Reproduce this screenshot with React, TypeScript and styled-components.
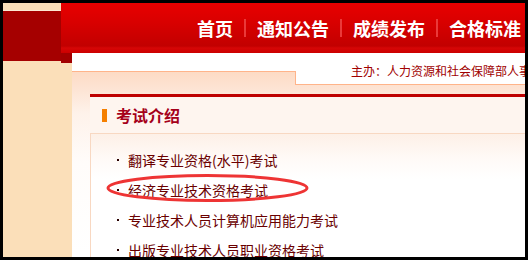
import React from "react";
import styled, { createGlobalStyle } from "styled-components";

const Global = createGlobalStyle`
  html, body { margin: 0; padding: 0; background: #ffffff; }
  body { font-family: "Noto Sans CJK SC", "Noto Sans", sans-serif; }
  #root { width: 531px; height: 262px; }
`;

const Frame = styled.div`
  position: relative;
  box-sizing: border-box;
  width: 528px;
  height: 260px;
  border: 3px solid #000;
  overflow: hidden;
  display: flex;
  background: #fbdfb9;
`;

const Sidebar = styled.div`
  flex: none;
  width: 58px;
  padding-top: 7px;
  background: #fbdfb9;
`;

const SideBlock = styled.div`
  height: 50px;
  border-top: 1px solid #fde9d3;
  background: #a50000;
`;

const Main = styled.div`
  flex: 1;
  min-width: 0;
  display: flex;
  flex-direction: column;
`;

const Header = styled.nav`
  flex: none;
  height: 50px;
  display: flex;
  align-items: center;
  padding-left: 136px;
  background: linear-gradient(
    to bottom,
    #e80000 0%,
    #d80000 40%,
    #c20000 86%,
    #d60606 90%,
    #cc0000 100%
  );
  white-space: nowrap;
`;

const NavItem = styled.span`
  color: #ffffff;
  font-size: 18px;
  font-weight: 700;
  line-height: 20px;
`;

const NavSep = styled.span`
  flex: none;
  width: 2px;
  height: 18px;
  margin: 0 11px;
  background: #ea3a3a;
`;

const Body = styled.div`
  flex: 1;
  display: flex;
  min-height: 0;
`;

const Gutter = styled.div`
  flex: none;
  width: 11px;
  background: linear-gradient(to bottom, #a20000 0 10px, #fbdfb9 10px);
`;

const Panel = styled.div`
  flex: 1;
  min-width: 0;
  display: flex;
  flex-direction: column;
  background: linear-gradient(
    to bottom,
    #ffffff 0,
    #ffffff 18px,
    #fddbc4 18px,
    #fde4d4 36px,
    #fef2ea 60px,
    #fffcfa 110px,
    #ffffff 200px
  );
`;

const SubBar = styled.div`
  flex: none;
  height: 32px;
  display: flex;
`;

const LeftTab = styled.div`
  flex: none;
  align-self: flex-end;
  box-sizing: border-box;
  width: 224px;
  height: 14px;
  border-top: 1px solid #ffb48a;
  border-right: 1px solid #ffb48a;
`;

const Sponsor = styled.div`
  flex: 1;
  min-width: 0;
  box-sizing: border-box;
  padding: 11px 0 0 55px;
  background: #ffffff;
  border-bottom: 1px solid #ffb48a;
  color: #a00000;
  font-size: 12px;
  line-height: 14px;
  white-space: nowrap;
  overflow: hidden;
`;

const Content = styled.div`
  flex: 1;
  padding: 9px 0 0 18px;
`;

const Section = styled.section`
  border-top: 3px solid #be0000;
  background: #fef5ef;
`;

const TitleRow = styled.div`
  height: 36px;
  display: flex;
  align-items: center;
  padding-left: 12px;
`;

const TitleBar = styled.span`
  flex: none;
  width: 5px;
  height: 13px;
  margin-right: 9px;
  background: #f57f00;
`;

const TitleText = styled.h2`
  margin: 0;
  color: #a5001a;
  font-size: 16px;
  font-weight: 700;
  line-height: 20px;
`;

const List = styled.ul`
  margin: 0;
  padding: 11px 0 0 26px;
  list-style: none;
  border-top: 1px solid #f8d8c2;
  border-left: 1px solid #f8d8c2;
  background: linear-gradient(to bottom, #fdf0e7 0, #fffaf7 25px, #ffffff 45px);
`;

const Item = styled.li`
  height: 30px;
  display: flex;
  align-items: center;
  color: #6a0000;
  font-size: 14px;
  line-height: 30px;
  white-space: nowrap;

  &::before {
    content: "";
    flex: none;
    width: 2px;
    height: 2px;
    margin-right: 9px;
    background: #2a0000;
  }
`;

const Mark = styled.svg`
  position: absolute;
  left: 97px;
  top: 169px;
  width: 212px;
  height: 32px;
  pointer-events: none;
`;

const navItems = ["首页", "通知公告", "成绩发布", "合格标准"];
const exams = [
  "翻译专业资格(水平)考试",
  "经济专业技术资格考试",
  "专业技术人员计算机应用能力考试",
  "出版专业技术人员职业资格考试",
];

export default function App() {
  return (
    <>
      <Global />
      <Frame>
        <Sidebar>
          <SideBlock />
        </Sidebar>
        <Main>
          <Header>
            {navItems.map((n, i) => (
              <React.Fragment key={n}>
                {i > 0 && <NavSep />}
                <NavItem>{n}</NavItem>
              </React.Fragment>
            ))}
          </Header>
          <Body>
            <Gutter />
            <Panel>
              <SubBar>
                <LeftTab />
                <Sponsor>主办：人力资源和社会保障部人事考试中心</Sponsor>
              </SubBar>
              <Content>
                <Section>
                  <TitleRow>
                    <TitleBar />
                    <TitleText>考试介绍</TitleText>
                  </TitleRow>
                  <List>
                    {exams.map((e) => (
                      <Item key={e}>{e}</Item>
                    ))}
                  </List>
                </Section>
              </Content>
            </Panel>
          </Body>
        </Main>
        <Mark viewBox="0 0 212 32">
          <ellipse cx="107.5" cy="16" rx="99.5" ry="12.5" fill="none" stroke="#ee3434" strokeWidth="3" />
        </Mark>
      </Frame>
    </>
  );
}
